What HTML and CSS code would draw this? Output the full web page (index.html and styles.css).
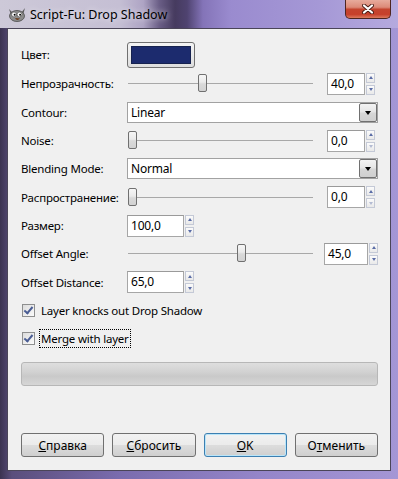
FILE: index.html
```html
<!DOCTYPE html>
<html lang="ru">
<head>
    <meta charset="UTF-8">
    <title>Script-Fu: Drop Shadow</title>
    <link rel="stylesheet" href="styles.css">
</head>
<body>
    <div class="window">
        <div class="titlebar">
            <svg class="app-icon" width="20" height="16" viewBox="0 0 20 16">
                <path d="M2 3 L6 7 L4 9 Z" fill="#5a5a5a"/>
                <path d="M18 2 L14 7 L16 9 Z" fill="#5a5a5a"/>
                <ellipse cx="10" cy="10" rx="7.5" ry="5.5" fill="#8c8c8c" stroke="#4a4a4a" stroke-width="0.8"/>
                <circle cx="7" cy="8.5" r="2.4" fill="#fff" stroke="#333" stroke-width="0.5"/>
                <circle cx="12.5" cy="8.5" r="2.4" fill="#fff" stroke="#333" stroke-width="0.5"/>
                <circle cx="7.6" cy="8.8" r="1" fill="#000"/>
                <circle cx="13.1" cy="8.8" r="1" fill="#000"/>
                <path d="M8 12 Q10 15.5 13 12.5 Z" fill="#6b3b1a"/>
            </svg>
            <span class="title">Script-Fu: Drop Shadow</span>
            <div class="close">
                <svg width="12" height="10" viewBox="0 0 12 10">
                    <path d="M2 1.5 L10 8.5 M10 1.5 L2 8.5" stroke="#4a1c14" stroke-width="4" stroke-linecap="round"/>
                    <path d="M2 1.5 L10 8.5 M10 1.5 L2 8.5" stroke="#fff" stroke-width="2.2" stroke-linecap="round"/>
                </svg>
            </div>
        </div>

        <div class="client">
            <div class="form">
                <label>Цвет:</label>
                <div class="color-btn"><span class="swatch"></span></div>

                <label>Непрозрачность:</label>
                <div class="scale">
                    <div class="slider"><span class="thumb" style="left:70px"></span></div>
                    <div class="spin">
                        <span class="entry">40,0</span>
                        <span class="arrows"><span class="arr up"></span><span class="arr down"></span></span>
                    </div>
                </div>

                <label>Contour:</label>
                <div class="combo"><span>Linear</span><span class="drop"></span></div>

                <label>Noise:</label>
                <div class="scale">
                    <div class="slider"><span class="thumb" style="left:0px"></span></div>
                    <div class="spin">
                        <span class="entry">0,0</span>
                        <span class="arrows"><span class="arr up"></span><span class="arr down off"></span></span>
                    </div>
                </div>

                <label>Blending Mode:</label>
                <div class="combo"><span>Normal</span><span class="drop"></span></div>

                <label>Распространение:</label>
                <div class="scale">
                    <div class="slider"><span class="thumb" style="left:0px"></span></div>
                    <div class="spin">
                        <span class="entry">0,0</span>
                        <span class="arrows"><span class="arr up"></span><span class="arr down off"></span></span>
                    </div>
                </div>

                <label>Размер:</label>
                <div class="spin spin-wide">
                    <span class="entry">100,0</span>
                    <span class="arrows"><span class="arr up"></span><span class="arr down"></span></span>
                </div>

                <label>Offset Angle:</label>
                <div class="scale">
                    <div class="slider"><span class="thumb" style="left:109px"></span></div>
                    <div class="spin spin-angle">
                        <span class="entry">45,0</span>
                        <span class="arrows"><span class="arr up"></span><span class="arr down"></span></span>
                    </div>
                </div>

                <label>Offset Distance:</label>
                <div class="spin spin-wide">
                    <span class="entry">65,0</span>
                    <span class="arrows"><span class="arr up"></span><span class="arr down"></span></span>
                </div>

                <div class="check-row">
                    <span class="checkbox checked"></span>
                    <span>Layer knocks out Drop Shadow</span>
                </div>

                <div class="check-row">
                    <span class="checkbox checked"></span>
                    <span class="focus">Merge with layer</span>
                </div>
            </div>

            <div class="progress"></div>

            <div class="buttons">
                <button><u>С</u>правка</button>
                <button><u>С</u>бросить</button>
                <button class="default"><u>O</u>K</button>
                <button>О<u>т</u>менить</button>
            </div>
        </div>
    </div>
</body>
</html>
```

FILE: styles.css
```css
body {
    margin: 0;
    font-family: "Noto Sans", "Open Sans", sans-serif;
    font-size: 11.5px;
    letter-spacing: -0.2px;
    color: #000;
}
.window {
    width: 398px;
    height: 479px;
    display: flex;
    flex-direction: column;
    background: linear-gradient(90deg, #3b3350 0, #5a4e7c 3%, #7a6cae 30%, #9485c9 65%, #a496d5 100%);
}
.titlebar {
    height: 28px;
    flex: none;
    display: flex;
    align-items: flex-start;
    background: linear-gradient(90deg, #cdc9d8 0, #c5bfd4 30%, #aea4c4 36%, #6a5e86 40%, #463b5f 44%, #4f4370 47%, #8474b8 51%, #9a8bcf 58%, #a598d6 80%, #b5aade 100%);
}
.app-icon {
    margin: 6px 0 0 7px;
}
.title {
    margin: 6px 0 0 3px;
    font-size: 12.5px;
    letter-spacing: 0;
    text-shadow: 0 0 6px rgba(255,255,255,0.8);
}
.close {
    margin-left: auto;
    margin-right: 7px;
    width: 44px;
    height: 18px;
    border: 1px solid #4d2520;
    border-top: none;
    border-radius: 0 0 5px 5px;
    background: linear-gradient(#e7ab9c 0, #dc8a78 40%, #c4442e 52%, #c6402b 80%, #dc7a5e 100%);
    display: flex;
    align-items: center;
    justify-content: center;
}
.client {
    flex: 1;
    margin: 0 7px 8px 7px;
    border: 1px solid #4a4558;
    background: #f0f0f0;
    display: flex;
    flex-direction: column;
    padding: 13px 12px 13px 13px;
}
.form {
    display: grid;
    grid-template-columns: 106px 1fr;
    grid-template-rows: 24.67px;
    grid-auto-rows: 22px;
    row-gap: 6.33px;
    align-items: center;
}
.color-btn {
    align-self: start;
    width: 66px;
    height: 24px;
    border: 1px solid #707070;
    border-radius: 3px;
    background: linear-gradient(#f4f4f4, #dedede);
    display: flex;
    align-items: center;
    justify-content: center;
}
.swatch {
    width: 58px;
    height: 16px;
    background: #1c2b6e;
    border: 1px solid #16224f;
}
.scale {
    display: flex;
    align-items: center;
    height: 22px;
}
.slider {
    position: relative;
    width: 185px;
    height: 1px;
    margin-left: 1px;
    background: #a8a8a8;
}
.thumb {
    position: absolute;
    top: -9px;
    width: 7px;
    height: 16px;
    border: 1px solid #707070;
    border-radius: 2px;
    background: linear-gradient(#f6f6f6 0, #eaeaea 45%, #d9d9d9 55%, #d2d2d2 100%);
}
.scale .spin {
    margin-left: auto;
    margin-right: 3px;
}
.scale .spin-angle {
    margin-right: 0;
}
.spin {
    display: flex;
    align-items: center;
    height: 22px;
}
.entry {
    box-sizing: border-box;
    width: 38px;
    height: 22px;
    padding-left: 3px;
    line-height: 20px;
    font-size: 12px;
    background: #fff;
    border: 1px solid #a6a6a6;
    border-top-color: #9a9a9a;
}
.spin-wide .entry {
    width: 57px;
}
.spin-angle .entry {
    width: 44px;
}
.arrows {
    display: flex;
    flex-direction: column;
    gap: 2px;
    margin-left: 1px;
}
.arr {
    box-sizing: border-box;
    width: 9px;
    height: 10px;
    border: 1px solid #c4c9d6;
    background: linear-gradient(#fbfbfb, #e9e9e9);
    position: relative;
}
.arr:after {
    content: "";
    position: absolute;
    left: 1.5px;
    top: 2.5px;
    border-left: 2.5px solid transparent;
    border-right: 2.5px solid transparent;
}
.up:after {
    border-bottom: 3px solid #5a6ca6;
}
.down:after {
    border-top: 3px solid #5a6ca6;
}
.down.off:after {
    border-top-color: #b3bbd2;
}
.combo {
    box-sizing: border-box;
    height: 21px;
    display: flex;
    align-items: center;
    background: #fff;
    border: 1px solid #a2a2a2;
    padding-left: 3px;
    font-size: 12px;
}
.drop {
    margin-left: auto;
    width: 16px;
    height: 17px;
    border: 1px solid #707070;
    border-radius: 2px;
    background: linear-gradient(#f3f3f3 0, #e6e6e6 45%, #d6d6d6 55%, #cfcfcf 100%);
    position: relative;
}
.drop:after {
    content: "";
    position: absolute;
    left: 4.5px;
    top: 7px;
    border-left: 3.5px solid transparent;
    border-right: 3.5px solid transparent;
    border-top: 4px solid #000;
}
.check-row {
    grid-column: 1 / 3;
    display: flex;
    align-items: center;
    gap: 6px;
    padding-left: 1px;
}
.checkbox {
    box-sizing: border-box;
    width: 13px;
    height: 13px;
    border: 1px solid #8e8f8f;
    background: linear-gradient(135deg, #dcdcdc, #fbfbfb);
    position: relative;
}
.checked:after {
    content: "";
    position: absolute;
    left: 3px;
    top: 0px;
    width: 3px;
    height: 7px;
    border-right: 2px solid #4a5d94;
    border-bottom: 2px solid #4a5d94;
    transform: rotate(40deg);
}
.focus {
    margin-left: -2px;
    padding: 0 1px;
    line-height: 17px;
    border: 1px dotted #000;
}
.progress {
    margin-top: 12px;
    height: 22px;
    border: 1px solid #b7b7b7;
    border-radius: 3px;
    background: linear-gradient(#dedede 0, #d2d2d2 40%, #c9c9c9 60%, #d6d6d6 100%);
}
.buttons {
    margin-top: auto;
    display: grid;
    grid-template-columns: repeat(4, 1fr);
    gap: 8px;
}
button {
    height: 24px;
    border: 1px solid #707070;
    border-radius: 3px;
    background: linear-gradient(#f2f2f2 0, #ebebeb 50%, #dddddd 50%, #cfcfcf 100%);
    font-family: inherit;
    font-size: 12px;
    color: #000;
    padding: 0;
}
button.default {
    border-color: #3c7fb1;
    box-shadow: inset 0 0 0 1px #b9e5f9;
}
```
